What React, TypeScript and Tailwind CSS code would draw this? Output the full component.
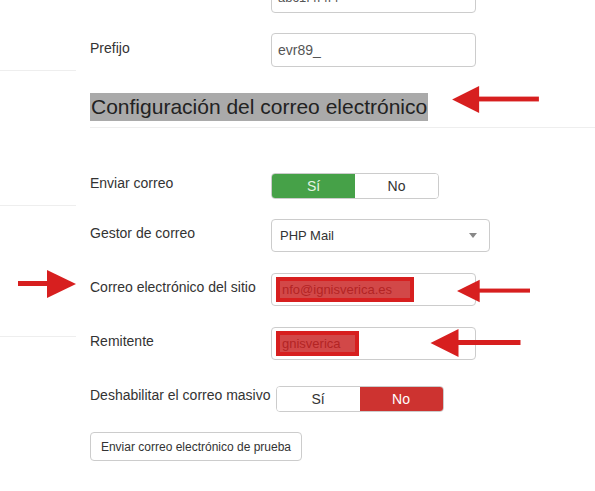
import React from 'react'

const font = { fontFamily: '"Liberation Sans", Arial, sans-serif' }

function ArrowLeft({ className }: { className: string }) {
  return (
    <svg className={className} viewBox="0 0 90 28" fill="#d71f1f">
      <polygon points="0,14 28,0 28,28" />
      <rect x="27" y="11" width="63" height="5" />
    </svg>
  )
}

function ArrowRight({ className }: { className: string }) {
  return (
    <svg className={className} viewBox="0 0 58 28" fill="#d71f1f">
      <polygon points="58,14 29,0 29,28" />
      <rect x="0" y="11" width="30" height="5" />
    </svg>
  )
}

function Toggle({ active }: { active: 'yes' | 'no' }) {
  return (
    <div className="flex h-[26px] w-[168px] rounded-[4px] border border-[#ccc] overflow-hidden text-[14px]">
      <div
        className={
          active === 'yes'
            ? 'flex-1 flex items-center justify-center bg-[#46a148] text-[#e4f4e4]'
            : 'flex-1 flex items-center justify-center bg-white text-[#333]'
        }
      >
        Sí
      </div>
      <div
        className={
          active === 'no'
            ? 'flex-1 flex items-center justify-center bg-[#cd3330] text-white'
            : 'flex-1 flex items-center justify-center bg-white text-[#333]'
        }
      >
        No
      </div>
    </div>
  )
}

function Redacted({ text, width }: { text: string; width: string }) {
  return (
    <span className={`inline-flex items-center h-[25px] px-[4px] bg-[#d71f1f] ${width}`}>
      <span className="flex-1 h-[17px] bg-[#d24848] text-[#b32424] text-[13px] leading-[17px] pl-[2px] overflow-hidden whitespace-nowrap">
        {text}
      </span>
    </span>
  )
}

export default function App() {
  return (
    <div className="relative w-[595px] h-[491px] overflow-hidden bg-white text-[#333]" style={font}>
      <div className="flex">
        {/* Sidebar */}
        <div className="w-[76px] shrink-0">
          <div className="h-[71px] border-b border-[#eee]" />
          <div className="h-[135px] border-b border-[#eee]" />
          <div className="h-[131px] border-b border-[#eee]" />
        </div>

        {/* Main form */}
        <div className="flex-1 pl-[14px]">
          <div className="-mt-[21px] flex">
            <div className="w-[181px]" />
            <div className="w-[205px] h-[34px] rounded-[4px] border border-[#ccc] px-[6px] pb-[6px] flex items-end text-[13px] leading-4 text-[#555]">
              abc1f4f4f4
            </div>
          </div>

          <div className="mt-[20px] flex">
            <div className="w-[181px] pt-[5px] text-[14px] leading-5">Prefijo</div>
            <div className="w-[205px] h-[34px] rounded-[4px] border border-[#ccc] px-[6px] flex items-center text-[14px] text-[#555]">
              evr89_
            </div>
          </div>

          <div className="mt-[26px]">
            <span className="inline-block bg-[#aaaaaa] text-[21px] leading-[28px] text-[#222] px-px">
              Configuración del correo electrónico
            </span>
          </div>
          <div className="mt-[6px] border-t border-[#eee]" />

          <div className="mt-[45px] flex">
            <div className="w-[181px] pt-0 text-[14px] leading-5">Enviar correo</div>
            <Toggle active="yes" />
          </div>

          <div className="mt-[20px] flex">
            <div className="w-[181px] pt-[4px] text-[14px] leading-5">Gestor de correo</div>
            <div className="w-[219px] h-[33px] rounded-[4px] border border-[#ccc] pl-[8px] pr-[12px] flex items-center justify-between text-[13px] text-[#333]">
              <span>PHP Mail</span>
              <span className="w-0 h-0 border-l-[4px] border-r-[4px] border-t-[5px] border-l-transparent border-r-transparent border-t-[#888]" />
            </div>
          </div>

          <div className="mt-[21px] flex">
            <div className="w-[181px] pt-[4px] text-[14px] leading-5">Correo electrónico del sitio</div>
            <div className="w-[205px] h-[33px] rounded-[4px] border border-[#ccc] pl-[4px] flex items-center">
              <Redacted text="nfo@ignisverica.es" width="w-[138px]" />
            </div>
          </div>

          <div className="mt-[21px] flex">
            <div className="w-[181px] pt-[4px] text-[14px] leading-5">Remitente</div>
            <div className="w-[205px] h-[33px] rounded-[4px] border border-[#ccc] pl-[4px] flex items-center">
              <Redacted text="gnisverica" width="w-[83px]" />
            </div>
          </div>

          <div className="mt-[26px] flex items-start gap-[5px]">
            <div className="pt-0 text-[14px] leading-5 -mt-[1px]">Deshabilitar el correo masivo</div>
            <Toggle active="no" />
          </div>

          <button className="mt-[20px] h-[29px] w-[212px] rounded-[4px] border border-[#ccc] bg-white text-[12px] text-[#333] flex items-center justify-center">
            Enviar correo electrónico de prueba
          </button>
        </div>
      </div>

      {/* Annotation arrows */}
      <ArrowLeft className="absolute left-[452px] top-[86px] w-[87px] h-[27px]" />
      <ArrowLeft className="absolute left-[457px] top-[278px] w-[73px] h-[26px]" />
      <ArrowLeft className="absolute left-[430px] top-[329px] w-[91px] h-[28px]" />
      <ArrowRight className="absolute left-[18px] top-[270px] w-[58px] h-[28px]" />
    </div>
  )
}
